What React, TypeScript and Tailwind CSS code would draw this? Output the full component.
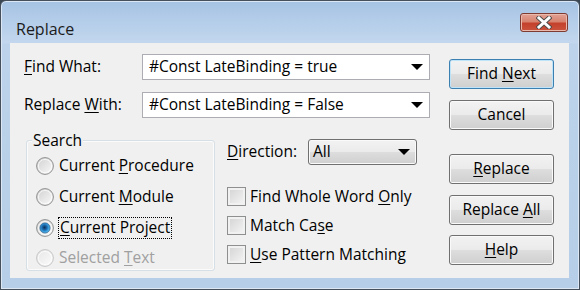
import React from "react";

function Acc({ children }: { children: React.ReactNode }) {
  return <span className="underline decoration-1 underline-offset-[2px]">{children}</span>;
}

function Btn({ children, primary }: { children: React.ReactNode; primary?: boolean }) {
  return (
    <div
      className={`flex h-[30px] w-[105px] items-center justify-center rounded-[3px] border bg-[linear-gradient(#f2f2f2_0%,#ebebeb_48%,#dddddd_52%,#cfcfcf_100%)] ${
        primary
          ? "border-[#3c7fb1] shadow-[inset_0_0_0_1px_#bde4f9]"
          : "border-[#707070] shadow-[inset_0_0_0_1px_#fafafa]"
      }`}
    >
      {children}
    </div>
  );
}

function Arrow() {
  return (
    <svg width="12" height="6" viewBox="0 0 12 6" className="absolute right-[6px] top-1/2 -translate-y-1/2">
      <path d="M0 0 H12 L6 6 Z" fill="#000" />
    </svg>
  );
}

function Combo({ value }: { value: string }) {
  return (
    <div className="relative flex h-[26px] w-[288px] items-center border border-[#abadb3] bg-white pl-[6px]">
      {value}
      <Arrow />
    </div>
  );
}

function Radio({ id, checked, disabled }: { id: string; checked?: boolean; disabled?: boolean }) {
  return (
    <svg width="18" height="18" viewBox="0 0 18 18" className="shrink-0">
      <defs>
        <linearGradient id={`${id}-f`} x1="0" y1="0" x2="1" y2="1">
          <stop offset="0" stopColor={disabled ? "#e6e6e6" : "#cfcfcf"} />
          <stop offset="1" stopColor="#fbfbfb" />
        </linearGradient>
        <radialGradient id={`${id}-d`} cx="0.45" cy="0.45" r="0.6">
          <stop offset="0" stopColor="#0b2f55" />
          <stop offset="0.45" stopColor="#1d6fb5" />
          <stop offset="0.8" stopColor="#47b4ee" />
          <stop offset="1" stopColor="#a8e2fb" />
        </radialGradient>
      </defs>
      <circle cx="9" cy="9" r="8.4" fill={`url(#${id}-f)`} stroke={disabled ? "#c5c5c5" : "#8e8f8f"} strokeWidth="1" />
      <circle cx="9" cy="9" r="6.6" fill="none" stroke="#ffffff" strokeOpacity="0.7" strokeWidth="1" />
      {checked && <circle cx="9" cy="9" r="5" fill={`url(#${id}-d)`} stroke="#1c5a8f" strokeWidth="0.8" />}
    </svg>
  );
}

function Check() {
  return (
    <div className="h-[19px] w-[19px] shrink-0 border border-[#8e8f8f] bg-[linear-gradient(135deg,#d2d2d2,#f6f6f6)] shadow-[inset_0_0_0_2px_#f1f1f1]" />
  );
}

function CloseBtn() {
  return (
    <div className="flex h-[19px] w-[48px] items-center justify-center rounded-[3px] border border-[#7d3b31] bg-[linear-gradient(#e2a195_0%,#d7836f_45%,#c4412c_55%,#c9533d_100%)] shadow-[inset_0_0_0_1px_#eab9ae]">
      <svg width="16" height="13" viewBox="0 0 16 13">
        <path d="M3 2 L13 11 M13 2 L3 11" stroke="#4a4a4a" strokeWidth="4.8" strokeLinecap="square" />
        <path d="M3 2 L13 11 M13 2 L3 11" stroke="#ffffff" strokeWidth="3" strokeLinecap="square" />
      </svg>
    </div>
  );
}

export default function App() {
  return (
    <div className="h-[290px] w-[580px] bg-[#3a4652] font-['Open_Sans','Segoe_UI',sans-serif] text-[15.5px] leading-none text-black">
      <div className="flex h-full w-full flex-col rounded-t-[6px] border border-[#46505c] bg-[linear-gradient(#a6c3e4_0px,#c3d7ee_42px,#bcd3eb_43px,#b7cee8_100%)] shadow-[inset_0_0_0_1px_#dbe7f4]">
        {/* title bar */}
        <div className="flex h-[42px] shrink-0 items-start">
          <span className="ml-[15px] mt-[20px] text-[16px] text-[#1b1b1b]">Replace</span>
          <div className="ml-auto mr-[11px] mt-[12px]">
            <CloseBtn />
          </div>
        </div>

        {/* client area */}
        <div className="ml-[9px] flex h-[235px] w-[559px] bg-[#f0f0f0] pl-[14px] pt-[11px]">
          <div className="flex w-[406px] flex-col">
            <div className="flex h-[26px] items-center">
              <span className="w-[118px]">
                <Acc>F</Acc>ind What:
              </span>
              <Combo value="#Const LateBinding = true" />
            </div>
            <div className="mt-[12px] flex h-[26px] items-center">
              <span className="w-[118px]">
                Replace <Acc>W</Acc>ith:
              </span>
              <Combo value="#Const LateBinding = False" />
            </div>

            <div className="mt-[22px] flex">
              {/* Search group */}
              <div className="relative ml-[2px] h-[131px] w-[189px] rounded-[3px] border border-[#d5dfe5] pt-[9px] shadow-[inset_0_0_0_1px_#fbfbfb]">
                <span className="absolute left-[5px] top-[-8px] bg-[#f0f0f0] px-[1px]">Search</span>
                <div className="flex h-[31px] items-center gap-[5px] pl-[9px]">
                  <Radio id="r1" />
                  <span>
                    Current <Acc>P</Acc>rocedure
                  </span>
                </div>
                <div className="flex h-[31px] items-center gap-[5px] pl-[9px]">
                  <Radio id="r2" />
                  <span>
                    Current <Acc>M</Acc>odule
                  </span>
                </div>
                <div className="flex h-[31px] items-center gap-[4px] pl-[9px]">
                  <Radio id="r3" checked />
                  <span className="flex h-[22px] items-center border border-dotted border-black pl-[1px] pr-[1px]">
                    <Acc>C</Acc>urrent Project
                  </span>
                </div>
                <div className="flex h-[29px] items-center gap-[5px] pl-[9px] text-[#a0a0a0]">
                  <Radio id="r4" disabled />
                  <span>
                    Selected <Acc>T</Acc>ext
                  </span>
                </div>
              </div>

              {/* direction + options */}
              <div className="ml-[12px] flex flex-col">
                <div className="mt-[-1px] flex h-[26px] items-center">
                  <span className="w-[81px]">
                    <Acc>D</Acc>irection:
                  </span>
                  <div className="relative flex h-[26px] w-[109px] items-center rounded-[3px] border border-[#707070] bg-[linear-gradient(#f2f2f2_0%,#ebebeb_48%,#dddddd_52%,#cfcfcf_100%)] pl-[4px] shadow-[inset_0_0_0_1px_#fafafa]">
                    All
                    <Arrow />
                  </div>
                </div>
                <div className="mt-[17px] flex h-[29px] items-center gap-[4px]">
                  <Check />
                  <span>
                    Find Whole Word <Acc>O</Acc>nly
                  </span>
                </div>
                <div className="flex h-[29px] items-center gap-[4px]">
                  <Check />
                  <span>
                    Match Ca<Acc>s</Acc>e
                  </span>
                </div>
                <div className="flex h-[29px] items-center gap-[4px]">
                  <Check />
                  <span>
                    <Acc>U</Acc>se Pattern Matching
                  </span>
                </div>
              </div>
            </div>
          </div>

          {/* buttons */}
          <div className="ml-[19px] mt-[5px] flex flex-col">
            <Btn primary>
              <span>
                Find <Acc>N</Acc>ext
              </span>
            </Btn>
            <div className="mt-[11px]">
              <Btn>Cancel</Btn>
            </div>
            <div className="mt-[24px]">
              <Btn>
                <span>
                  <Acc>R</Acc>eplace
                </span>
              </Btn>
            </div>
            <div className="mt-[11px]">
              <Btn>
                <span>
                  Replace <Acc>A</Acc>ll
                </span>
              </Btn>
            </div>
            <div className="mt-[10px]">
              <Btn>
                <span>
                  <Acc>H</Acc>elp
                </span>
              </Btn>
            </div>
          </div>
        </div>
      </div>
    </div>
  );
}
